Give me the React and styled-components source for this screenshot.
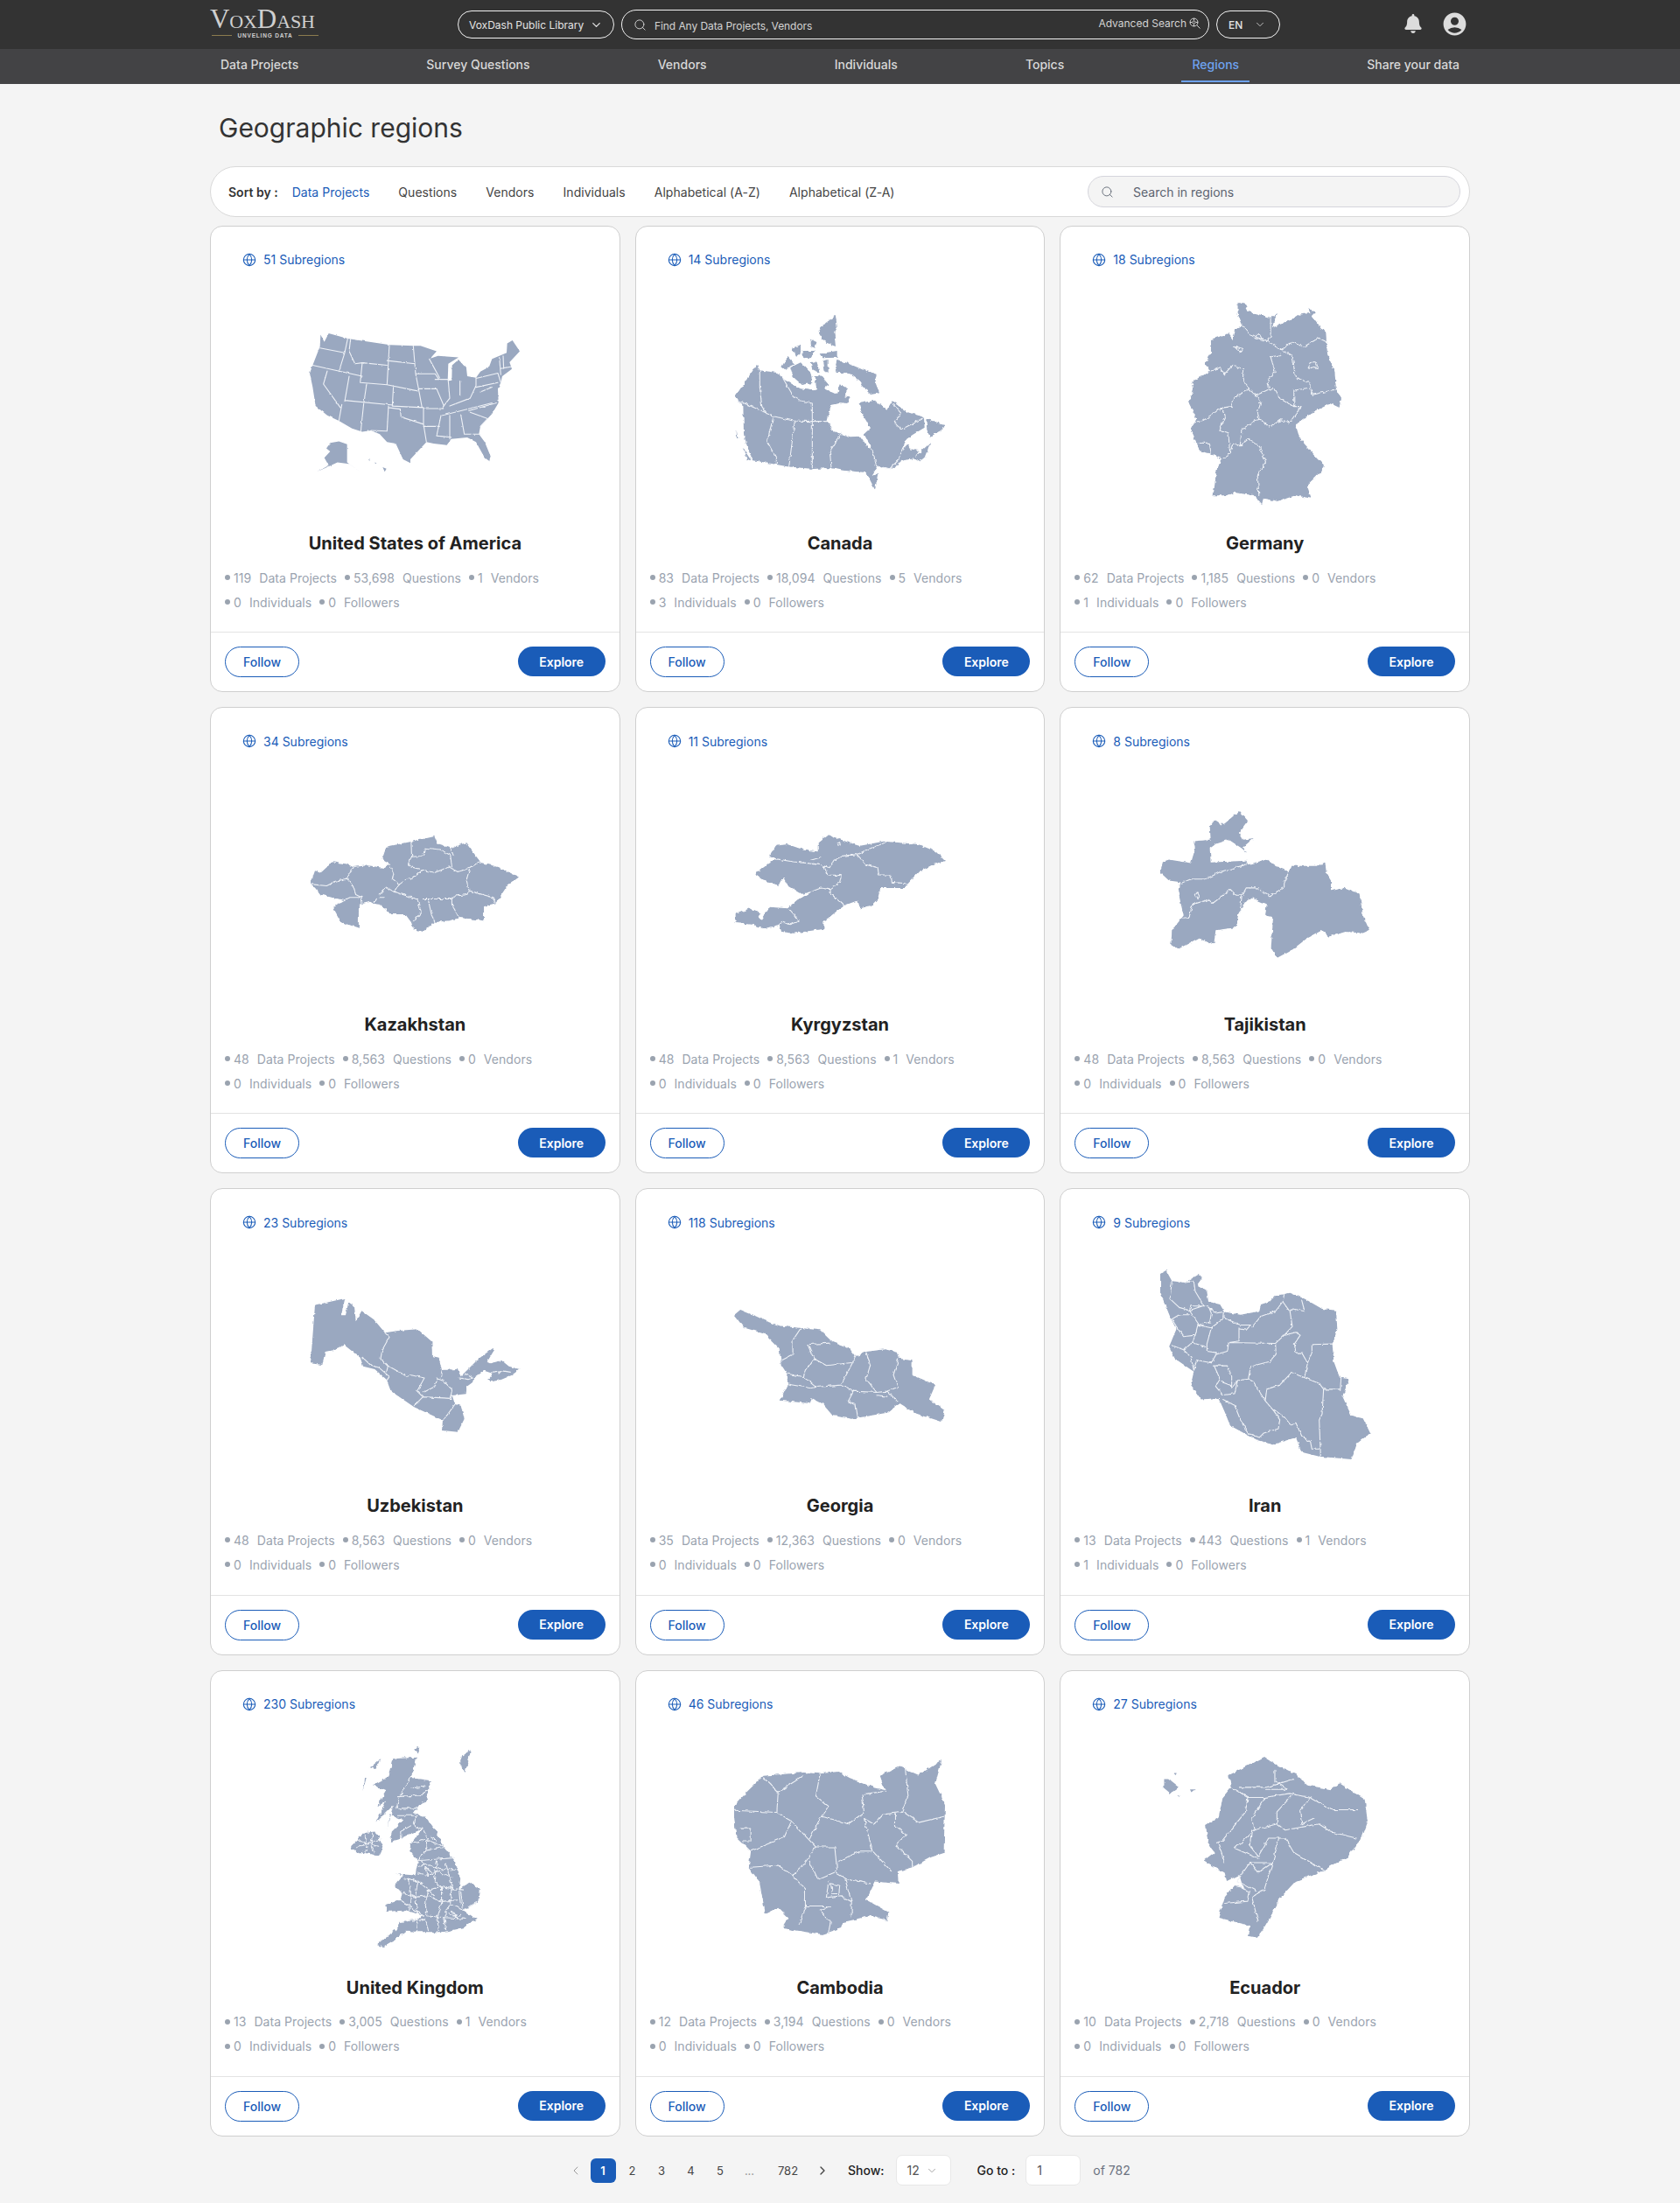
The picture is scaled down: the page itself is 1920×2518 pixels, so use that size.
import React from "react";
import styled, { createGlobalStyle } from "styled-components";
import { ChevronDown, ChevronLeft, ChevronRight, Globe, Search } from "lucide-react";
import { FaBell } from "react-icons/fa";
import { MdAccountCircle } from "react-icons/md";

const BLUE = "#1a5cb8";

const Reset = createGlobalStyle`
  html, body { margin: 0; padding: 0; background: #f4f4f4; }
  body { font-family: Inter, "Liberation Sans", sans-serif; color: #333; }
  * { box-sizing: border-box; }
`;

const TopBar = styled.header`
  height: 56px;
  background: #333333;
`;
const Wrap = styled.div`
  width: 1440px;
  margin: 0 auto;
`;
const TopRow = styled(Wrap)`
  height: 56px;
  display: flex;
  align-items: center;
`;
const Logo = styled.div`
  width: 283px;
  display: flex;
  flex-direction: column;
  color: #cfcfcf;
`;
const LogoWord = styled.div`
  width: 124px;
  font: 400 31px/26px "Liberation Serif", serif;
  font-variant: small-caps;
  white-space: nowrap;
  margin-top: -3px;
  letter-spacing: -0.1px;
`;
const LogoSub = styled.div`
  width: 124px;
  display: flex;
  align-items: center;
  gap: 7px;
  padding-left: 2px;
  margin-top: 2px;
  font: 700 6.5px/8px "Liberation Sans", sans-serif;
  letter-spacing: 0.8px;
  white-space: nowrap;
  &::before, &::after {
    content: "";
    flex: 1;
    height: 1px;
    background: #8b7b4e;
  }
`;
const Pill = styled.div`
  height: ${(p) => p.$h || 32}px;
  width: ${(p) => p.$w}px;
  border: 1px solid #f2f2f2;
  border-radius: 17px;
  display: flex;
  align-items: center;
  color: #e4e4e4;
  font-size: 12px;
  white-space: nowrap;
`;
const LibraryPill = styled(Pill)`
  padding: 0 12px;
  justify-content: space-between;
  margin-right: 8px;
`;
const SearchPill = styled(Pill)`
  padding: 0 9px 0 13px;
  margin-right: 8px;
  color: #d4d4d4;
`;
const SearchText = styled.span`
  margin-left: 9px;
  padding-top: 2px;
  flex: 1;
  letter-spacing: -0.08px;
`;
const AdvancedText = styled.span`
  color: #d4d4d4;
  margin-right: 3px;
  padding-bottom: 3px;
  font-size: 12px;
`;
const AdvancedIcon = styled.svg`
  margin-bottom: 3px;
`;
const LangPill = styled(Pill)`
  padding: 0 15px 0 13px;
  justify-content: space-between;
  font-weight: 500;
`;
const TopIcons = styled.div`
  margin-left: auto;
  padding: 0 2px 2px 0;
  display: flex;
  align-items: center;
  gap: 21px;
  color: #dcdcdc;
`;

const NavBar = styled.nav`
  height: 40px;
  background: #434345;
`;
const NavRow = styled(Wrap)`
  height: 40px;
  display: flex;
  justify-content: space-between;
`;
const NavItem = styled.a`
  padding: 0 12px 1px;
  display: flex;
  align-items: center;
  font-size: 14px;
  font-weight: 500;
  color: ${(p) => (p.$active ? "#6ea2f0" : "#d8d8d8")};
  border-bottom: 2px solid ${(p) => (p.$active ? "#6ea2f0" : "transparent")};
  margin-bottom: 2px;
`;

const Title = styled.h1`
  margin: 32px 0 26px 10px;
  font-size: 30px;
  line-height: 36px;
  font-weight: 400;
  color: #333;
`;
const SortBar = styled.div`
  height: 58px;
  background: #fff;
  border: 1px solid #d9d9d9;
  border-radius: 29px;
  padding: 0 10px 0 20px;
  display: flex;
  align-items: center;
  margin-bottom: 10px;
  font-size: 14px;
`;
const SortLabel = styled.span`
  font-weight: 600;
  font-size: 14px;
  color: #333;
  margin-right: 16px;
`;
const SortLink = styled.a`
  margin-right: 33px;
  letter-spacing: 0.04px;
  color: ${(p) => (p.$active ? BLUE : "#444")};
  white-space: nowrap;
`;
const RegionSearch = styled.div`
  margin-left: auto;
  width: 426px;
  height: 36px;
  border: 1px solid #d5d5dc;
  border-radius: 18px;
  background: #f4f4f4;
  display: flex;
  align-items: center;
  gap: 22px;
  padding-left: 14px;
  color: #5c6370;
`;

const Grid = styled.main`
  display: grid;
  grid-template-columns: repeat(3, 1fr);
  gap: 17px;
`;
const Card = styled.article`
  height: 533.2px;
  background: #fff;
  border: 1px solid #cfcfcf;
  border-radius: 14px;
  display: flex;
  flex-direction: column;
`;
const Badge = styled.div`
  margin: 28px 0 0 36px;
  height: 20px;
  display: flex;
  align-items: center;
  gap: 8px;
  font-size: 14px;
  color: ${BLUE};
`;
const MapSlot = styled.div`
  margin-top: 34px;
  height: 240px;
  display: flex;
  align-items: center;
  justify-content: center;
`;
const MapSvg = styled.svg`
  display: block;
  overflow: visible;
  path { vector-effect: non-scaling-stroke; stroke-linejoin: round; stroke-linecap: round; }
`;
const CardTitle = styled.h2`
  margin: 27px 0 0;
  height: 28px;
  font-size: 20px;
  line-height: 28px;
  font-weight: 700;
  color: #222;
  text-align: center;
`;
const Stats = styled.div`
  padding: 11px 16px 20.2px;
`;
const StatRow = styled.div`
  height: 28px;
  display: flex;
  align-items: center;
  gap: 9px;
  font-size: 14px;
  letter-spacing: 0.05px;
  color: #9aa3af;
`;
const Stat = styled.span`
  display: flex;
  align-items: center;
  white-space: nowrap;
  &::before {
    content: "";
    width: 6px;
    height: 6px;
    border-radius: 50%;
    background: #9aa3af;
    margin-right: 4px;
  }
`;
const StatLabel = styled.span`
  margin-left: 9px;
`;
const CardFoot = styled.footer`
  border-top: 1px solid #e3e3e3;
  padding: 16px;
  display: flex;
  justify-content: space-between;
`;
const FollowBtn = styled.button`
  width: 85px;
  height: 35px;
  border: 1px solid ${BLUE};
  border-radius: 18px;
  background: #fff;
  color: ${BLUE};
  font: 500 14px Inter, sans-serif;
`;
const ExploreBtn = styled.button`
  width: 100px;
  height: 34px;
  border: 0;
  border-radius: 17px;
  background: ${BLUE};
  color: #fff;
  font: 600 14px Inter, sans-serif;
`;

const Pager = styled.div`
  height: 75px;
  padding: 21.6px 0 0 406px;
  display: flex;
  align-items: flex-start;
  font-size: 14px;
`;
const PageList = styled.div`
  height: 35px;
  display: flex;
  align-items: center;
  gap: 4.5px;
  font-size: 13px;
  color: #444;
`;
const PageItem = styled.span`
  width: ${(p) => p.$w || 29}px;
  height: 28px;
  display: flex;
  align-items: center;
  justify-content: center;
  border-radius: 6px;
  background: ${(p) => (p.$active ? BLUE : "transparent")};
  color: ${(p) => (p.$active ? "#fff" : p.$muted ? "#999" : "inherit")};
  font-weight: ${(p) => (p.$active ? 600 : 400)};
`;
const PagerLabel = styled.span`
  height: 35px;
  line-height: 35px;
  margin-left: ${(p) => p.$ml}px;
  font-weight: 500;
  color: #222;
  font-size: 14px;
`;
const PagerBox = styled.div`
  width: 63px;
  height: 35px;
  margin-left: ${(p) => p.$ml}px;
  background: #fff;
  border: 1px solid #e8e8e8;
  border-radius: 7px;
  display: flex;
  align-items: center;
  justify-content: space-between;
  padding: 0 14px 0 12px;
  font-size: 14px;
  color: #555;
`;
const PagerOf = styled.span`
  height: 35px;
  line-height: 35px;
  margin-left: 14px;
  color: #6b7280;
`;

const MAPS = {
  usa: {
    vb: "375 368 720 444", w: 240, h: 159, rough: 2,
    fill: "M412 372 425 395 440 368 505 385 650 405 730 408 755 408 810 425 788 448 815 440 885 445 850 465 848 520 862 518 863 470 885 452 912 480 915 505 945 510 960 490 990 475 1000 450 1025 440 1050 430 1052 400 1070 390 1095 425 1060 460 1068 482 1035 505 1030 525 1020 545 1022 590 1000 625 960 665 955 690 975 715 995 760 990 775 975 765 945 715 915 700 860 705 845 725 800 720 775 715 720 770 720 782 695 770 670 720 640 715 615 690 585 678 555 682 520 672 475 647 435 630 395 600 385 540 375 495 385 470 410 410ZM445 718 475 713 503 722 503 780 548 810 510 785 470 780 400 810 440 790 425 765 445 745 432 735ZM625 795 638 800 632 810ZM575 770 582 772 580 775ZM598 780 604 782 600 785Z",
    lines: "M505 385 495 430 475 490M410 415 495 430M385 470 555 505M435 488 422 530 480 605M510 505 495 585M515 385 510 425 530 465 555 462 640 470M555 462 548 525 640 532M648 405 640 532 745 552M640 455 735 465M730 408 738 497 805 497 818 515M738 497 750 555 760 605M570 530 560 592M495 582 660 597M662 535 658 600 765 605M560 592 550 680M645 600 640 680 585 678M645 605 685 610 688 635 765 658M765 605 765 658 775 715M475 647 485 595M750 545 810 545 835 600M765 608 830 608M825 630 810 695 860 700M765 665 820 665M855 630 855 705M893 628 905 690 960 690M830 630 1000 590M805 515 850 515M850 520 855 575 830 605M890 520 890 565M945 510 945 535 925 575 855 600M945 512 1020 495 1030 525M945 540 1020 525M920 615 1015 590M925 620 985 640 960 665M1025 445 1030 500M1038 440 1040 480M1030 480 1065 475M785 450 820 510M960 555 1000 540",
  },
  canada: {
    vb: "120 92 720 603", w: 240, h: 201, rough: 4,
    fill: "M120 372 195 262 205 282 265 290 290 315 345 345 400 352 395 305 415 300 440 330 425 345 470 365 482 330 510 345 495 375 478 395 450 400 436 455 455 490 515 510 550 508 575 545 590 552 562 500 585 480 555 430 545 395 600 385 640 418 660 385 710 425 760 440 768 445 770 478 730 502 708 518 690 556 712 535 722 552 752 558 735 580 755 562 790 530 770 580 752 595 735 585 700 590 680 600 665 620 610 610 590 640 610 635 600 692 570 632 490 625 450 617 388 620 300 612 180 590 160 540 150 500 148 400 130 385ZM778 450 830 465 840 478 790 510 782 498ZM405 150 430 120 465 95 470 130 460 150 465 200 440 190 420 175ZM380 175 400 185 395 205 380 200ZM470 245 500 255 560 280 605 295 600 320 615 360 585 365 555 335 540 310 520 295 495 290 470 290 465 265ZM480 370 515 375 505 395 480 392ZM280 270 300 235 325 260 305 270 290 278ZM310 272 345 255 380 290 385 325 350 332 320 305ZM315 205 345 195 345 225 330 235ZM350 215 395 215 380 240 350 235ZM410 225 470 215 470 238 420 240ZM380 255 400 250 410 290 385 280ZM420 250 440 245 440 290 425 285ZM145 545 175 590 165 592ZM125 485 130 515 126 515Z",
    lines: "M130 385 255 440 320 455 385 457 435 457M385 395 385 620M325 455 305 612M252 440 230 525 262 585 262 605M285 310 320 370 340 385 385 395M205 282 205 340 212 405 228 430M485 497 445 560 450 617M590 552 605 610 650 620 680 590 700 545M665 460 690 485 765 445M665 460 690 430 660 395",
  },
  germany: {
    vb: "55 45 523 705", w: 174, h: 235, rough: 5,
    fill: "M222 55 245 55 260 85 300 95 335 105 355 90 340 140 400 115 430 95 470 90 500 130 525 160 530 230 555 290 560 350 578 380 570 415 540 400 480 430 420 470 435 520 480 570 518 610 510 630 460 680 475 725 420 715 360 735 310 725 305 745 280 715 210 705 190 715 138 715 150 625 170 590 125 570 95 565 60 490 80 450 55 400 70 350 65 325 125 290 110 260 130 230 130 180 190 160 205 180 215 145 240 135 222 90ZM465 75 490 85 475 100Z",
    lines: "M240 135 265 165 325 185 370 215 410 235 420 310 470 330 470 345 415 355 415 410 370 385 350 350 330 350 325 320 350 290 335 240 370 232M335 105 335 170 325 185M370 215 410 190 450 205 500 175 530 190M470 345 480 370 560 350M415 410 440 410 400 465 370 455 330 480 295 450 290 430 300 400 285 372 330 350M285 372 260 350 240 310 240 280 205 268 175 300 160 275 125 290M260 350 210 380 200 410 165 415 100 460 62 470M165 415 180 445 160 490 190 500 195 570 170 590M295 450 235 490 230 545 205 535 195 570M230 545 260 520 295 545 318 600 290 645 295 715M72 535 125 535 130 570M210 205 240 215 230 222ZM280 175 295 160 310 185ZM470 260 490 255 498 280 465 275Z",
  },
  kazakhstan: {
    vb: "45 110 715 328", w: 238, h: 109, rough: 4,
    fill: "M45 270 60 228 80 235 120 198 170 205 190 215 240 210 300 218 315 205 290 190 305 145 390 128 470 110 480 135 525 150 578 132 630 200 690 215 760 250 720 280 680 340 640 350 640 400 560 390 520 400 470 405 430 438 400 430 390 405 370 378 320 378 285 345 262 342 250 335 210 345 210 425 150 405 125 360 125 350 160 330 80 310Z",
    lines: "M52 275 100 280 130 265 170 255 190 215M170 255 190 280 200 310 220 320 222 340M160 330 180 320 220 320M315 205 330 240 325 255 350 275 330 300 305 285 280 312M350 275 370 260 400 250 430 225M390 128 392 180 380 200 390 215 430 225 470 235 520 215 550 232 590 220 612 205 630 200M392 180 430 178 440 150 490 155 525 175 530 215M525 150 535 175M590 225 580 260 590 300 585 310 540 315 530 325 410 325 330 300M590 297 670 320 680 340M410 325 425 370 395 405M448 325 460 380 472 405M530 325 530 345 555 390M262 335 272 325M280 320 298 320",
  },
  kyrgyzstan: {
    vb: "60 72 722 342", w: 240, h: 114, rough: 4,
    fill: "M130 208 175 170 205 155 180 145 200 110 240 105 300 125 345 130 345 100 380 72 440 95 490 110 570 95 690 105 750 130 782 162 740 175 690 200 655 240 645 255 560 255 550 295 530 318 490 325 482 298 435 315 365 370 365 395 260 410 220 405 212 380 160 395 120 380 62 375 62 345 110 325 150 345 140 355 150 365 180 320 240 325 275 295 285 290 330 265 290 275 240 245 225 215 210 245 170 235Z",
    lines: "M200 155 260 165 310 170 350 175 385 185 400 160 430 145 480 140 510 125 575 100M480 140 510 175 550 185 555 210 595 210 600 235 655 240M320 160 355 150M365 180 380 210 425 212 420 235 385 260 355 255 330 265M385 260 385 270 435 315M245 325 262 345 280 370 250 380 225 370 212 380M412 102 420 98 422 108 414 108Z",
  },
  tajikistan: {
    vb: "45 52 717 503", w: 239, h: 168, rough: 4,
    fill: "M315 52 345 85 315 125 330 150 365 145 330 175 342 195 325 180 280 150 235 165 215 180 218 228 340 222 345 235 410 218 440 240 485 260 495 240 580 240 610 228 615 265 630 290 630 325 680 315 728 335 740 410 762 460 740 470 680 465 625 482 600 460 545 490 500 525 445 555 425 520 432 415 405 410 410 370 360 350 335 365 312 405 305 450 235 460 230 500 210 505 180 485 105 525 82 510 85 460 125 410 108 335 115 295 75 290 45 262 55 225 75 218 150 230 165 180 160 155 218 150 215 105 232 82 260 100Z",
    lines: "M118 298 150 285 200 285 235 268 250 260 340 235M485 260 470 300 470 312 420 345 380 315 340 315 320 350M125 418 145 415 155 372 210 355 225 368 285 320 305 340 325 340 318 400M165 340 172 330 180 345 172 352Z",
  },
  uzbekistan: {
    vb: "45 72 717 462", w: 239, h: 154, rough: 3,
    fill: "M60 95 163 72 150 130 165 130 175 85 195 100 200 150 220 115 262 145 300 190 345 183 412 178 460 220 462 270 485 275 495 318 548 315 560 340 575 325 585 315 620 280 670 243 675 248 650 290 660 295 700 285 725 305 762 315 735 335 700 350 665 358 655 350 670 330 640 320 605 345 600 360 580 375 578 400 530 405 540 435 560 440 572 485 550 530 495 525 498 490 400 445 320 390 305 350 265 315 225 305 215 275 160 232 120 250 95 255 85 300 45 295Z",
    lines: "M300 190 315 205 290 250 285 280 310 305 305 325M220 272 250 300 280 310 315 340 305 355M305 300 375 340 390 335 435 345 410 390 430 410 400 440M430 410 525 415 530 405M430 395 470 375 480 348 500 355 530 385 525 410M495 320 490 345M555 345 585 350 600 345 575 330M540 435 500 490M665 325 700 320 730 325M700 320 690 330",
  },
  georgia: {
    vb: "20 15 503 275", w: 241, h: 128, rough: 3,
    fill: "M20 28 35 15 70 30 95 42 130 55 180 60 225 65 255 95 295 110 310 130 335 118 380 112 410 120 415 135 445 140 445 175 500 200 485 235 522 262 515 290 455 270 415 245 385 268 300 283 255 275 230 245 205 232 200 245 130 238 148 200 145 170 132 150 128 110 95 75 45 60Z",
    lines: "M178 62 160 90 160 125 132 140M200 100 250 97M195 100 210 135 190 165 185 180 215 205 275 200M210 135 240 152 300 145M310 130 295 160 275 200 305 215 360 218 335 185 345 150 335 120M412 135 400 175 410 205 385 215 360 218M145 172 185 180M150 198 205 208 215 205M305 215 292 240 310 248 315 280M385 215 410 240M360 225 385 228",
  },
  iran: {
    vb: "45 68 720 650", w: 240, h: 217, rough: 3,
    fill: "M45 80 65 68 85 105 130 110 180 80 188 95 170 120 205 140 210 175 250 185 265 210 320 220 385 208 390 185 420 175 440 155 490 145 540 165 600 200 648 205 652 270 635 320 640 380 660 435 692 440 670 500 700 565 740 575 765 625 720 660 700 715 590 705 530 690 510 640 430 665 380 650 340 630 285 600 265 550 245 505 185 510 150 460 160 415 95 370 75 330 100 270 80 230 60 180 45 145Z",
    lines: "M85 105 78 165 110 195 145 205 190 190M130 110 160 105 165 140 195 190M145 205 175 250 165 290 125 295 100 260 85 235 110 220 145 220M145 205 150 190 210 190 220 215 215 245 175 255M210 195 235 215 262 210 260 230 285 240 320 255 355 255 340 272 315 268M175 255 220 265 265 230M220 265 205 320 205 345 240 350 220 385M165 290 155 315 125 340 85 325M125 340 150 365 160 410M155 315 200 330M315 265 315 310 280 315 275 345 240 355M280 315 440 318 442 355 420 380 355 397 347 440 310 445 295 465 255 450M220 385 170 375 160 410M230 395 250 440 235 465 260 495 300 490 310 445M230 395 275 395 290 430 290 470M260 510 300 530 320 580 345 625 385 640 400 625 450 610 455 580 435 550 405 515 365 450 347 440M405 515 410 475 455 460 495 418 590 455 605 475 600 560 590 580 595 705M435 545 470 570 490 595 510 590 530 635 560 655 565 680 590 680M605 475 660 475M665 435 662 480M540 432 550 385 565 350 565 322 635 320M440 318 470 290 510 280 525 290 505 320 510 350 530 350 550 385M360 262 390 225 440 208 465 175 490 210 500 200 540 208 530 170M490 210 498 260 470 290M470 150 465 175",
  },
  uk: {
    vb: "35 30 440 685", w: 147, h: 228, rough: 5,
    fill: "M180 70 260 65 240 135 310 145 290 215 270 230 250 255 290 270 325 315 350 370 390 420 410 480 405 520 440 495 475 515 470 560 420 590 465 620 420 650 350 665 265 665 225 660 195 685 145 715 125 710 190 655 200 630 260 620 285 610 225 590 160 595 155 570 205 555 210 530 185 505 215 470 190 465 255 470 265 420 235 385 240 360 280 310 225 335 205 345 170 355 175 320 215 280 170 260 160 310 180 230 120 290 155 215 125 235 155 180 110 160 165 130ZM35 370 80 325 120 320 145 375 130 405 75 390 55 395ZM100 100 135 72 120 105ZM410 65 445 40 425 120 410 90ZM250 35 270 30 265 55ZM80 135 88 135 76 180Z",
    lines: "M200 200 240 135M195 200 270 195 305 175M245 170 290 165M200 205 190 240 260 240M195 265 260 265 250 300 280 310M240 300 205 320 205 345M280 310 300 345 240 360M300 350 350 370M295 350 290 385 350 375M290 385 265 420 390 410M265 440 300 432 340 450 400 450M265 462 300 470 330 455 385 480M280 420 300 470M330 420 320 490 345 510M360 430 380 500M220 480 265 490 300 520 345 510 420 520M215 530 255 545 300 540 345 560 400 555M230 480 240 530 235 590M265 490 255 545 262 600M300 520 290 570 295 610M345 510 345 565 330 610 335 660M380 500 375 570 355 610 360 660M410 520 420 590 465 560M205 555 285 610M200 630 290 620 300 660M260 620 265 665M300 610 355 615 430 620M60 350 90 360 130 370M80 325 90 360 85 395M110 320 105 360 115 395M55 375 90 360 140 345M405 520 410 570M300 520 320 540M290 440 310 460M370 600 410 620M380 590 400 620M385 610 415 605M310 340 330 350M375 570 420 590",
  },
  cambodia: {
    vb: "20 1122 503 428", w: 241, h: 199, rough: 3,
    fill: "M20 1235 50 1200 90 1160 185 1152 225 1155 270 1150 295 1165 355 1190 380 1195 368 1160 415 1138 460 1158 515 1122 500 1180 523 1230 520 1350 490 1360 445 1385 410 1395 412 1425 355 1420 335 1465 388 1495 385 1515 345 1505 280 1520 275 1535 230 1550 135 1535 150 1510 125 1485 95 1500 80 1420 55 1385 60 1345 25 1310 20 1260Z",
    lines: "M90 1165 125 1200 185 1160M125 1200 122 1250 20 1245M122 1250 155 1270 215 1335 260 1335 265 1390M225 1155 215 1210 245 1235 225 1265 200 1315M325 1205 330 1250 290 1280 265 1270 230 1260M380 1198 330 1205M428 1140 435 1210 420 1250 375 1255 355 1280 330 1265M330 1265 350 1345 320 1345 270 1370M350 1345 395 1395M405 1255 405 1285 430 1305 405 1330 445 1370 445 1385M425 1250 460 1275 520 1260M155 1275 140 1310 60 1345M215 1335 185 1380 160 1405 190 1440 190 1480 250 1480M60 1385 125 1380 160 1405M200 1370 220 1415 265 1395M265 1400 290 1415 345 1425M245 1420 240 1460 275 1455 300 1470 285 1415M250 1425 272 1430 270 1450 255 1450ZM190 1480 175 1525M250 1480 225 1490 250 1520 245 1545M300 1470 300 1505M35 1290 60 1290 60 1320 40 1320",
  },
  ecuador: {
    vb: "1045 1115 492 445", w: 235, h: 207, rough: 3,
    fill: "M1205 1160 1290 1115 1320 1135 1370 1160 1390 1185 1450 1195 1470 1180 1530 1220 1537 1275 1525 1310 1490 1360 1430 1395 1365 1420 1320 1470 1320 1480 1275 1560 1250 1555 1255 1530 1180 1510 1195 1460 1220 1430 1240 1440 1230 1405 1200 1420 1195 1400 1145 1370 1170 1350 1155 1325 1150 1285 1180 1265 1190 1215 1210 1190ZM1048 1170 1060 1170 1085 1190 1065 1205 1048 1190ZM1112 1195 1124 1195 1115 1202ZM1072 1155 1080 1155 1078 1160ZM1084 1210 1088 1210 1086 1214Z",
    lines: "M1210 1190 1250 1215 1245 1250 1190 1320 1175 1325M1230 1190 1295 1190 1360 1170M1315 1150 1315 1175 1345 1195 1295 1195M1250 1215 1290 1215 1350 1205 1400 1215 1450 1245 1525 1245M1360 1205 1320 1250 1320 1280 1340 1295 1420 1280 1450 1300 1510 1315M1290 1215 1260 1265 1265 1295 1320 1280M1400 1215 1375 1250 1380 1280 1410 1265M1265 1295 1220 1340 1275 1365M1260 1295 1255 1330 1275 1360 1300 1315 1340 1315M1325 1315 1310 1375 1255 1375 1225 1420 1270 1445M1340 1315 1360 1350 1435 1395M1255 1375 1275 1400 1310 1375 1290 1440 1260 1460 1275 1520M1225 1435 1255 1445 1250 1470 1195 1475M1180 1330 1195 1375",
  },
};

const DATA = [
  ["51", "United States of America", "usa", "119", "53,698", "1", "0", "0"],
  ["14", "Canada", "canada", "83", "18,094", "5", "3", "0"],
  ["18", "Germany", "germany", "62", "1,185", "0", "1", "0"],
  ["34", "Kazakhstan", "kazakhstan", "48", "8,563", "0", "0", "0"],
  ["11", "Kyrgyzstan", "kyrgyzstan", "48", "8,563", "1", "0", "0"],
  ["8", "Tajikistan", "tajikistan", "48", "8,563", "0", "0", "0"],
  ["23", "Uzbekistan", "uzbekistan", "48", "8,563", "0", "0", "0"],
  ["118", "Georgia", "georgia", "35", "12,363", "0", "0", "0"],
  ["9", "Iran", "iran", "13", "443", "1", "1", "0"],
  ["230", "United Kingdom", "uk", "13", "3,005", "1", "0", "0"],
  ["46", "Cambodia", "cambodia", "12", "3,194", "0", "0", "0"],
  ["27", "Ecuador", "ecuador", "10", "2,718", "0", "0", "0"],
];

function RegionMap({ id }) {
  const m = MAPS[id];
  const fid = `rough-${id}`;
  return (
    <MapSvg width={m.w} height={m.h} viewBox={m.vb} preserveAspectRatio="none" aria-hidden="true">
      <defs>
        <filter id={fid} x="-5%" y="-5%" width="110%" height="110%">
          <feTurbulence type="fractalNoise" baseFrequency="0.07" numOctaves="2" seed="4" result="n" />
          <feDisplacementMap in="SourceGraphic" in2="n" scale={m.rough * 3} xChannelSelector="R" yChannelSelector="G" />
        </filter>
      </defs>
      <g filter={`url(#${fid})`}>
        <path d={m.fill} fill="#9aa8c0" />
        <path d={m.lines} fill="none" stroke="#eef1f6" strokeWidth="1.1" />
      </g>
    </MapSvg>
  );
}

function StatItem({ n, label }) {
  return (
    <Stat>
      {n}
      <StatLabel>{label}</StatLabel>
    </Stat>
  );
}

function RegionCard({ d }) {
  const [subs, name, id, projects, questions, vendors, people, followers] = d;
  return (
    <Card>
      <Badge>
        <Globe size={16} strokeWidth={1.6} />
        {subs} Subregions
      </Badge>
      <MapSlot>
        <RegionMap id={id} />
      </MapSlot>
      <CardTitle>{name}</CardTitle>
      <Stats>
        <StatRow>
          <StatItem n={projects} label="Data Projects" />
          <StatItem n={questions} label="Questions" />
          <StatItem n={vendors} label="Vendors" />
        </StatRow>
        <StatRow>
          <StatItem n={people} label="Individuals" />
          <StatItem n={followers} label="Followers" />
        </StatRow>
      </Stats>
      <CardFoot>
        <FollowBtn>Follow</FollowBtn>
        <ExploreBtn>Explore</ExploreBtn>
      </CardFoot>
    </Card>
  );
}

export default function App() {
  return (
    <>
      <Reset />
      <TopBar>
        <TopRow>
          <Logo>
            <LogoWord>VoxDash</LogoWord>
            <LogoSub>UNVELING DATA</LogoSub>
          </Logo>
          <LibraryPill $w={179}>
            VoxDash Public Library
            <ChevronDown size={15} strokeWidth={2} />
          </LibraryPill>
          <SearchPill $w={672} $h={34}>
            <Search size={15} strokeWidth={1.5} />
            <SearchText>Find Any Data Projects, Vendors</SearchText>
            <AdvancedText>Advanced Search</AdvancedText>
            <AdvancedIcon width="13" height="13" viewBox="0 0 13 13" fill="none" stroke="#d4d4d4" strokeWidth="1">
              <circle cx="5.5" cy="5.5" r="4.5" />
              <circle cx="5.5" cy="5.5" r="1.6" />
              <path d="M5.5 1v2.2M5.5 7.8V10M1 5.5h2.2M7.8 5.5H10M9 9l3.5 3.5" />
            </AdvancedIcon>
          </SearchPill>
          <LangPill $w={73}>
            EN
            <ChevronDown size={14} strokeWidth={1.3} />
          </LangPill>
          <TopIcons>
            <FaBell size={22} />
            <MdAccountCircle size={31} />
          </TopIcons>
        </TopRow>
      </TopBar>
      <NavBar>
        <NavRow>
          {["Data Projects", "Survey Questions", "Vendors", "Individuals", "Topics", "Regions", "Share your data"].map((t) => (
            <NavItem key={t} $active={t === "Regions"}>{t}</NavItem>
          ))}
        </NavRow>
      </NavBar>
      <Wrap>
        <Title>Geographic regions</Title>
        <SortBar>
          <SortLabel>Sort by :</SortLabel>
          {["Data Projects", "Questions", "Vendors", "Individuals", "Alphabetical (A-Z)", "Alphabetical (Z-A)"].map((t, i) => (
            <SortLink key={t} $active={i === 0}>{t}</SortLink>
          ))}
          <RegionSearch>
            <Search size={15} strokeWidth={1.4} />
            Search in regions
          </RegionSearch>
        </SortBar>
        <Grid>
          {DATA.map((d) => (
            <RegionCard key={d[1]} d={d} />
          ))}
        </Grid>
        <Pager>
          <PageList>
            <PageItem $w={24} $muted><ChevronLeft size={16} strokeWidth={1.5} /></PageItem>
            <PageItem $active>1</PageItem>
            <PageItem>2</PageItem>
            <PageItem>3</PageItem>
            <PageItem>4</PageItem>
            <PageItem>5</PageItem>
            <PageItem $muted>...</PageItem>
            <PageItem $w={50}>782</PageItem>
            <PageItem $w={19}><ChevronRight size={16} strokeWidth={2} /></PageItem>
          </PageList>
          <PagerLabel $ml={20}>Show:</PagerLabel>
          <PagerBox $ml={13}>
            12
            <ChevronDown size={14} strokeWidth={1.5} color="#999" />
          </PagerBox>
          <PagerLabel $ml={30}>Go to :</PagerLabel>
          <PagerBox $ml={12}>1</PagerBox>
          <PagerOf>of 782</PagerOf>
        </Pager>
      </Wrap>
    </>
  );
}
